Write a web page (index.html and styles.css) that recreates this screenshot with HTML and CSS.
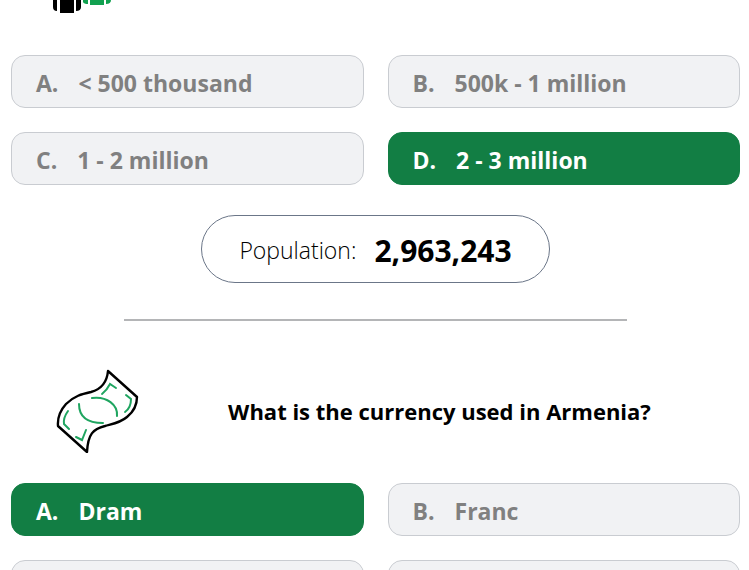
FILE: index.html
```html
<!DOCTYPE html>
<html lang="en">
<head>
    <meta charset="UTF-8">
    <meta name="viewport" content="width=device-width, initial-scale=1.0">
    <title>Armenia Quiz</title>
    <link rel="stylesheet" href="styles.css">
</head>
<body>

    <main class="quiz">
        <section class="question">
            <svg class="people-icon" viewBox="0 0 60 13" aria-hidden="true">
                <path class="person-black" d="M0 0H4V11Q0 11 0 7ZM7 0H21V13H7ZM23 0H28V7Q28 11 23 11Z"/>
                <path class="person-green" d="M30 0H35V4Q31 4 30 2ZM37 0H51V5H37ZM53 0H58Q58 4 53 4Z"/>
            </svg>
            <div class="answers">
                <button type="button" class="answer"><span>A.</span><span>&lt; 500 thousand</span></button>
                <button type="button" class="answer"><span>B.</span><span>500k - 1 million</span></button>
                <button type="button" class="answer"><span>C.</span><span>1 - 2 million</span></button>
                <button type="button" class="answer correct"><span>D.</span><span>2 - 3 million</span></button>
            </div>
            <p class="fact">Population: <strong>2,963,243</strong></p>
        </section>

        <hr class="divider">

        <section class="question">
            <div class="question-header">
                <svg class="money-icon" viewBox="0 0 84 84" aria-hidden="true">
                    <path class="note" d="M53 2L82 28Q82 40 72 48C65 54 57 55 50 57C38 60 33 65 32 83L3 57Q2 45 11 35C19 27 27 25 36 23C47 20 52 13 53 2Z"/>
                    <path class="note-detail" d="M37 29C52 27 63 36 62 47M24 35C24 48 33 54 48 54M47 25Q52 21 55 15L61 19M71 26L76 30Q76 39 70 43M13 42Q8 49 9 55L14 60M31 61L27 71L21 68"/>
                </svg>
                <h2>What is the currency used in Armenia?</h2>
            </div>
            <div class="answers">
                <button type="button" class="answer correct"><span>A.</span><span>Dram</span></button>
                <button type="button" class="answer"><span>B.</span><span>Franc</span></button>
                <button type="button" class="answer" aria-label="C"></button>
                <button type="button" class="answer" aria-label="D"></button>
            </div>
        </section>
    </main>

</body>
</html>
```

FILE: styles.css
```css
* {
    box-sizing: border-box;
}

body {
    margin: 0;
    height: 100vh;
    overflow: hidden;
    background-color: #fff;
    color: #000;
    font-family: "Segoe UI", "Open Sans", "Noto Sans", sans-serif;
}

.quiz {
    padding: 0 9px 0 11px;
}

/* Question icons and title */
.people-icon {
    display: block;
    width: 60px;
    height: 13px;
    margin: 0 0 42px 42px;
}

.person-black {
    fill: #000;
}

.person-green {
    fill: #12a150;
}

.question-header {
    display: flex;
    align-items: center;
    padding: 0 0 30px 44px;
}

.money-icon {
    flex: none;
    width: 84px;
    height: 84px;
}

.note {
    fill: none;
    stroke: #000;
    stroke-width: 2.4;
    stroke-linejoin: round;
}

.note-detail {
    fill: none;
    stroke: #1fa560;
    stroke-width: 2;
    stroke-linecap: round;
}

h2 {
    flex: 1;
    margin: 0;
    font-size: 22px;
    font-weight: 700;
    line-height: 32px;
    text-align: center;
}

/* Answers */
.answers {
    display: grid;
    grid-template-columns: 1fr 1fr;
    gap: 24px;
}

.answer {
    display: flex;
    align-items: center;
    gap: 20px;
    height: 53px;
    padding: 3px 24px 0;
    border: 1px solid #c9ccd1;
    border-radius: 14px;
    background-color: #f1f2f4;
    color: #808080;
    font-family: inherit;
    font-size: 23px;
    font-weight: 700;
    text-align: left;
    cursor: pointer;
}

.answer.correct {
    border-color: #127e44;
    background-color: #127e44;
    color: #fff;
}

/* Fact under the answers */
.fact {
    display: flex;
    align-items: center;
    gap: 18px;
    width: fit-content;
    height: 68px;
    margin: 30px auto 36px;
    padding: 2px 37px 0;
    border: 1px solid #6b7688;
    border-radius: 34px;
    font-size: 23px;
    font-weight: 300;
}

.fact strong {
    font-size: 30px;
    font-weight: 700;
}

.divider {
    width: 69%;
    height: 2px;
    margin: 0 auto 48px;
    border: none;
    background-color: #b4b5b7;
}
```
